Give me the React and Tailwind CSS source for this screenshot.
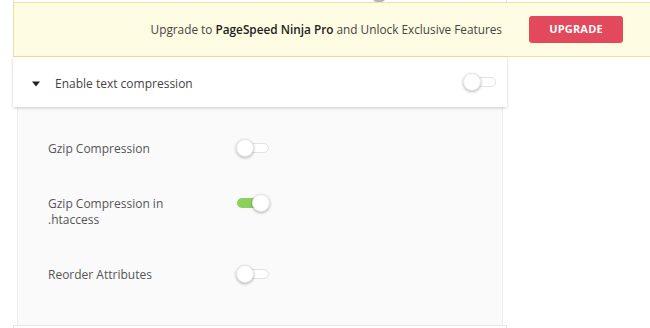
import React from "react";

function Toggle({ on = false }) {
  return (
    <div className="relative h-[18px] w-[34px] shrink-0">
      <div
        className={
          on
            ? "absolute left-[1px] top-[4px] h-[10px] w-[30px] rounded-full bg-[#8cd15c]"
            : "absolute left-[8px] top-[4px] h-[10px] w-[25px] rounded-full border border-[#e2e2e2] bg-white"
        }
      />
      <div
        className={
          (on ? "left-[16px] " : "left-0 ") +
          "absolute top-0 h-[18px] w-[18px] rounded-full border border-[#e6e6e6] bg-white shadow-[0_1px_3px_rgba(0,0,0,0.3)]"
        }
      />
    </div>
  );
}

function Row({ label, on }) {
  return (
    <div className="flex items-start">
      <div className="w-[188px] pr-[40px] text-[12px] leading-[16px] text-[#555]">{label}</div>
      <div className="-mt-[2px]">
        <Toggle on={on} />
      </div>
    </div>
  );
}

export default function App() {
  return (
    <div
      className="h-[328px] w-[650px] overflow-hidden bg-white"
      style={{ fontFamily: '"Open Sans", "Liberation Sans", sans-serif' }}
    >
      <div className="relative ml-[13px] h-[2px] w-[494px] border-x border-[#e4e4e4]">
        <div className="absolute left-[358px] top-[-9px] h-[11px] w-[14px] rounded-full bg-[#b5b5b5]" />
      </div>
      <div className="ml-[13px] flex h-[55px] items-center justify-end border-y border-l border-[#e9e29c] bg-[#fefce2] pr-[27px]">
        <div className="whitespace-nowrap text-[11.8px] text-[#444]">
          Upgrade to <span className="font-semibold text-[#222]">PageSpeed Ninja Pro</span> and Unlock
          Exclusive Features
        </div>
        <div className="ml-[27px] flex h-[27px] w-[94px] shrink-0 items-center justify-center rounded-[3px] bg-[#e2495c] text-[11px] font-bold tracking-[0.2px] text-white">
          UPGRADE
        </div>
      </div>
      <div className="relative z-10 ml-[13px] flex h-[50px] w-[494px] items-center bg-white pl-[19px] pr-[10px] pt-[3px] shadow-[0_1px_3px_rgba(0,0,0,0.2)]">
        <svg width="8" height="6" viewBox="0 0 8 6" className="shrink-0">
          <path d="M0 0.5 L8 0.5 L4 5.5 Z" fill="#222" />
        </svg>
        <div className="ml-[15px] text-[12px] text-[#444]">Enable text compression</div>
        <div className="ml-auto -mt-[3px]">
          <Toggle />
        </div>
      </div>
      <div className="ml-[17px] flex h-[218px] w-[486px] flex-col gap-[39px] border-x border-[#ececec] bg-[#fafafa] pl-[30px] pt-[34px]">
        <Row label="Gzip Compression" />
        <Row label="Gzip Compression in .htaccess" on />
        <Row label="Reorder Attributes" />
      </div>
      <div className="ml-[13px] h-[10px] w-[494px] border border-[#e6e6e6] bg-white" />
    </div>
  );
}
